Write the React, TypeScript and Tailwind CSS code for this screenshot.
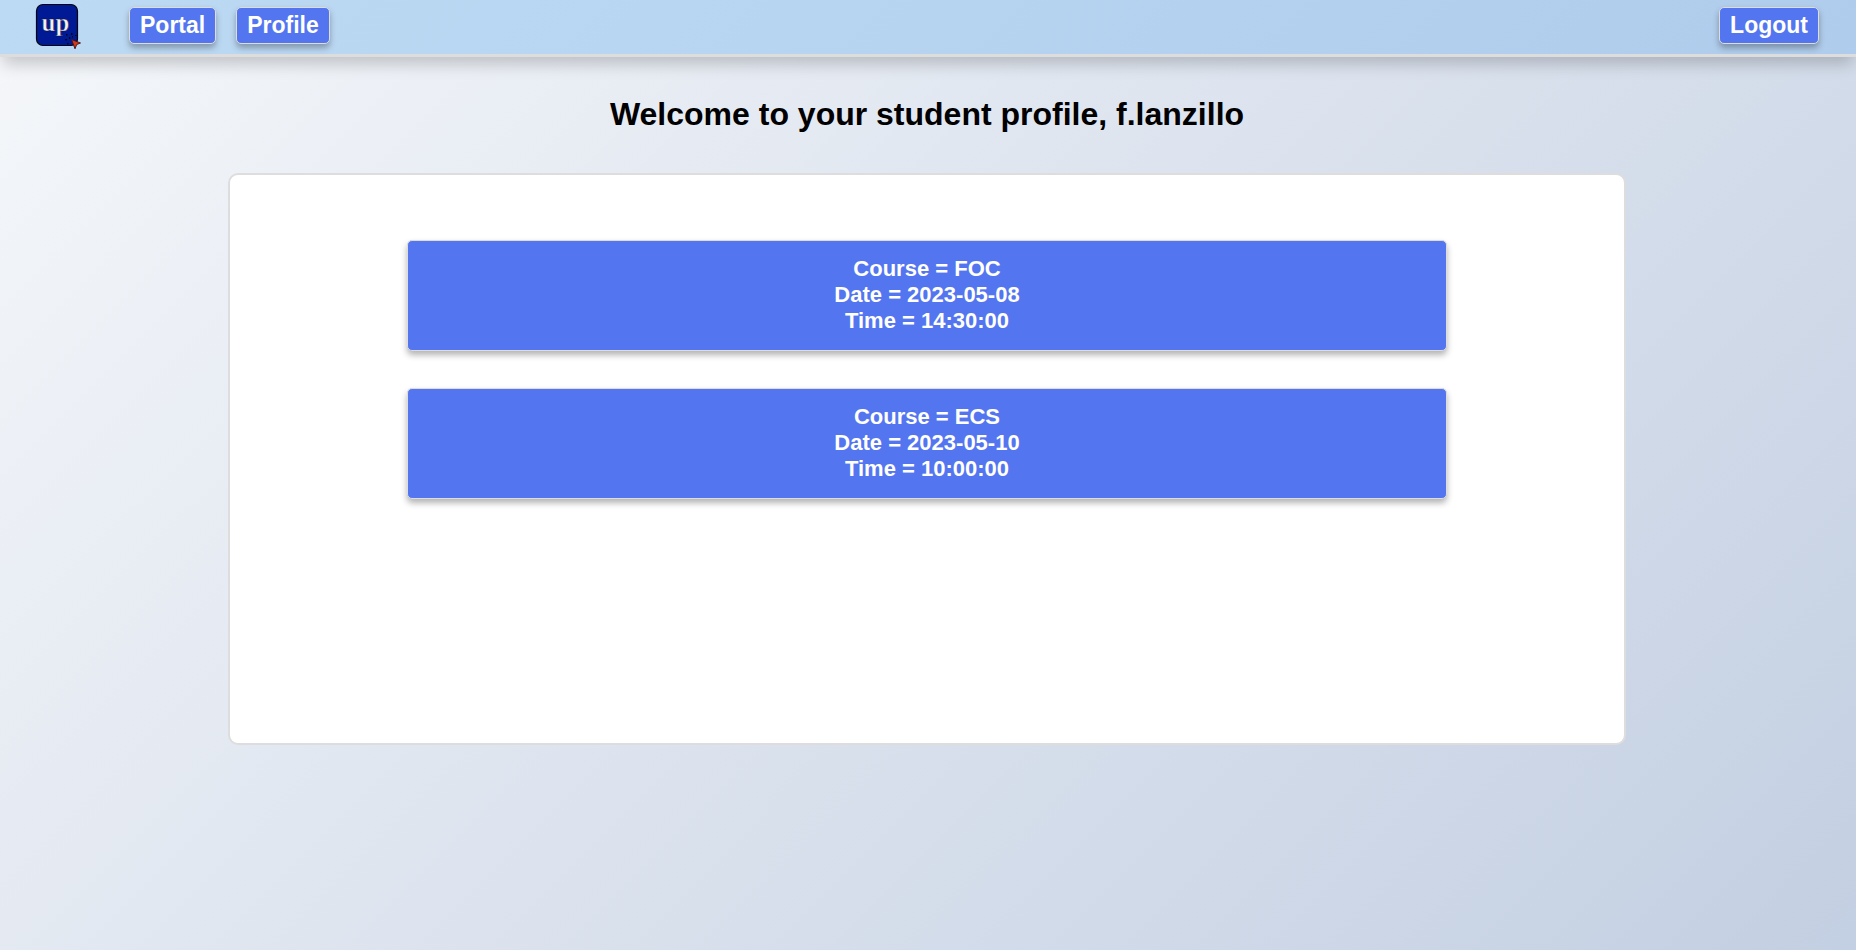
import type { ReactNode } from "react";

const courses = [
  { course: "FOC", date: "2023-05-08", time: "14:30:00" },
  { course: "ECS", date: "2023-05-10", time: "10:00:00" },
];

function NavButton({ children }: { children: ReactNode }) {
  return (
    <button
      type="button"
      className="h-[37px] rounded-[5px] border border-[#dddddd] bg-[#5475f0] px-2.5 pb-0.5 text-[23px] leading-7 font-bold text-white shadow-[0_4px_6px_rgba(0,0,0,0.3)]"
    >
      {children}
    </button>
  );
}

function Logo() {
  return (
    <svg width="48" height="48" viewBox="0 0 48 48" role="img" aria-label="up">
      <rect x="1.5" y="1.5" width="41" height="41" rx="6.5" fill="#001a96" stroke="#04060f" strokeWidth="1.2" />
      <text x="20.500" y="28" textAnchor="middle" fontSize="25" fontWeight="bold" fontFamily="Liberation Serif, serif" fill="#f4f1f0" stroke="#0a0f3c" strokeWidth="0.5">
        up
      </text>
      <g fill="#04060f">
        <path d="M31 31h1.500v1.500h-1.500zM36 30h1.500v2h-1.500zM40 32h1.500v1h-1.500zM30 36h2v1.200h-2zM34 34h1.200v2h-1.200zM32 40h1.500v1.200h-1.500zM37 33h1v1.500h-1z" />
      </g>
      <path d="M36.500 36.500l9 3.500-3.800 1.500-1.700 4.300z" fill="#d03a1c" stroke="#4a0f0a" strokeWidth="0.9" strokeLinejoin="round" />
    </svg>
  );
}

export default function App() {
  return (
    <div className="min-h-screen bg-linear-135 from-[#f5f7fa] to-[#c3cfe2] font-['Liberation_Sans',Arial,sans-serif]">
      <header className="flex h-[57px] items-start justify-between border-b-3 border-[#dddddd] bg-linear-135 from-[#bddaf4] to-[#afccec] pr-[37px] pl-[35px] shadow-[0_10px_15px_-3px_rgba(0,0,0,0.2)]">
        <nav className="flex items-start">
          <a href="#home" className="mt-[3px] mr-[46px]">
            <Logo />
          </a>
          <div className="flex gap-5 pt-[7px]">
            <NavButton>Portal</NavButton>
            <NavButton>Profile</NavButton>
          </div>
        </nav>
        <div className="pt-[7px]">
          <NavButton>Logout</NavButton>
        </div>
      </header>
      <main className="pr-0.5 pt-[38px]">
        <h1 className="text-center text-[32px] leading-[38px] font-bold text-black">
          Welcome to your student profile, f.lanzillo
        </h1>
        <section className="mx-auto mt-10 flex min-h-[572px] w-[75.4%] flex-col items-center gap-[37px] rounded-[10px] border-2 border-[#dddddd] bg-white pt-[65px]">
          {courses.map((c) => (
            <button
              key={c.course}
              type="button"
              className="w-[74.6%] rounded-[5px] border border-[#dddddd] bg-[#5475f0] pt-[15px] pb-4 text-[22px] leading-[26px] font-bold text-white shadow-[0_4px_6px_rgba(0,0,0,0.3)]"
            >
              Course = {c.course}
              <br />
              Date = {c.date}
              <br />
              Time = {c.time}
            </button>
          ))}
        </section>
      </main>
    </div>
  );
}
